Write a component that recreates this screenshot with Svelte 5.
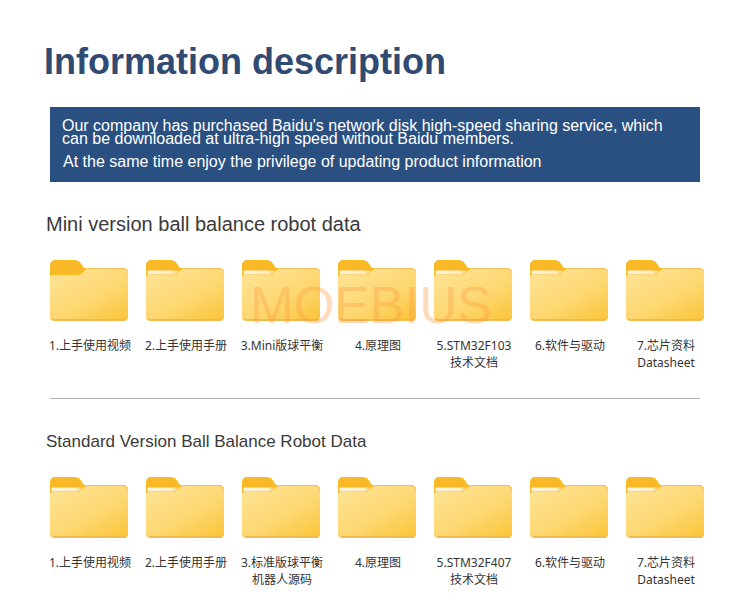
<script>
  const miniItems = [
    { label: '1.上手使用视频', sheet: false },
    { label: '2.上手使用手册', sheet: true },
    { label: '3.Mini版球平衡', sheet: true },
    { label: '4.原理图', sheet: true },
    { label: '5.STM32F103 技术文档', sheet: true },
    { label: '6.软件与驱动', sheet: true },
    { label: '7.芯片资料 Datasheet', sheet: true }
  ];
  const standardItems = [
    { label: '1.上手使用视频', sheet: true },
    { label: '2.上手使用手册', sheet: true },
    { label: '3.标准版球平衡 机器人源码', sheet: true },
    { label: '4.原理图', sheet: true },
    { label: '5.STM32F407 技术文档', sheet: true },
    { label: '6.软件与驱动', sheet: true },
    { label: '7.芯片资料 Datasheet', sheet: true }
  ];
</script>

{#snippet folders(items, prefix)}
  <ul class="folders">
    {#each items as item, i}
      <li>
        <svg class="folder" viewBox="0 0 78 61" width="78" height="61">
          <defs>
            <linearGradient id="{prefix}{i}" x1="0.1" y1="0" x2="0.9" y2="1">
              <stop offset="0" stop-color="#fee394" />
              <stop offset="0.55" stop-color="#fdd873" />
              <stop offset="1" stop-color="#fcc53c" />
            </linearGradient>
            <linearGradient id="{prefix}{i}s">
              <stop offset="0" stop-color="#fdf3d8" />
              <stop offset="0.7" stop-color="#fdeec4" />
              <stop offset="1" stop-color="#fee394" stop-opacity="0" />
            </linearGradient>
          </defs>
          <path d="M0 5a5 5 0 0 1 5-5h19c3.500 0 5.500 1.500 7 3.500l3 4.500h39a5 5 0 0 1 5 5v10H0z" fill="#f9b825" />
          <path d="M0 17.500c0-1.500 1-2.500 3-2.500h24c3 0 5.500-1.500 6.500-3.200 1-1.700 2.500-3.300 5-3.300H73a5 5 0 0 1 5 5v43a5 5 0 0 1-5 5H5a5 5 0 0 1-5-5z" fill="url(#{prefix}{i})" />
          <path d="M38.500 8.500H73a5 5 0 0 1 5 5" fill="none" stroke="#efbe5c" stroke-width="1" />
          <path d="M0 56a5 5 0 0 0 5 5h68a5 5 0 0 0 5-5v-1a4 4 0 0 1-4 4H4a4 4 0 0 1-4-4z" fill="#f0b94e" />
          {#if item.sheet}
            <rect x="1.500" y="10.500" width="35" height="4" rx="1" fill="url(#{prefix}{i}s)" />
          {/if}
        </svg>
        <span class="label">{item.label}</span>
      </li>
    {/each}
  </ul>
{/snippet}

<main class="page">
  <h1>Information description</h1>

  <div class="banner">
    <p class="tight">Our company has purchased Baidu's network disk high-speed sharing service, which can be downloaded at ultra-high speed without Baidu members.</p>
    <p class="second">At the same time enjoy the privilege of updating product information</p>
  </div>

  <h2 class="mini">Mini version ball balance robot data</h2>
  <div class="watermark-wrap">
    {@render folders(miniItems, 'mini')}
    <div class="watermark">MOEBIUS</div>
  </div>

  <hr />

  <h2 class="standard">Standard Version Ball Balance Robot Data</h2>
  {@render folders(standardItems, 'std')}
</main>

<style>
:global(body) {
  margin: 0;
  background: #fff;
}

.page {
  width: 750px;
  height: 614px;
  box-sizing: border-box;
  padding-top: 41px;
  overflow: hidden;
  font-family: "Liberation Sans", Arial, sans-serif;
}

h1 {
  margin: 0 0 0 44px;
  font-size: 36px;
  line-height: 41px;
  font-weight: 700;
  color: #2f4a73;
}

.banner {
  margin: 25px 50px 0;
  height: 75px;
  box-sizing: border-box;
  padding: 12px 12px 0;
  background: #2a5082;
  color: #fff;
  font-size: 16px;
}

.banner p {
  margin: 0;
}

.tight {
  line-height: 13px;
}

.second {
  margin-top: 8px !important;
  margin-left: 1px !important;
  line-height: 18px;
}

h2 {
  margin: 0 0 0 46px;
  font-weight: 400;
  color: #3a3a3a;
}

h2.mini {
  margin-top: 30px;
  font-size: 20px;
  line-height: 24px;
}

h2.standard {
  margin-top: 33px;
  font-size: 17px;
  line-height: 20px;
}

.watermark-wrap {
  position: relative;
}

.watermark {
  position: absolute;
  left: 250px;
  top: 15px;
  font-size: 52.500px;
  line-height: 60px;
  color: #ff9d45;
  opacity: 0.36;
  white-space: nowrap;
}

.folders {
  list-style: none;
  margin: 24px 0 0 42px;
  padding: 0;
  display: grid;
  grid-template-columns: repeat(7, 96px);
}

h2.standard + .folders {
  margin-top: 25px;
}

li {
  display: flex;
  flex-direction: column;
  align-items: center;
  height: 111px;
}

.folder {
  display: block;
  flex: none;
  margin-right: 2px;
}

.label {
  margin-top: 16px;
  width: 86px;
  text-align: center;
  font-family: "Noto Sans", "Noto Sans CJK SC", sans-serif;
  font-size: 12px;
  line-height: 17px;
  color: #333;
}

hr {
  margin: 27px 50px 0;
  border: 0;
  border-top: 1px solid #b4b4b4;
}
</style>
